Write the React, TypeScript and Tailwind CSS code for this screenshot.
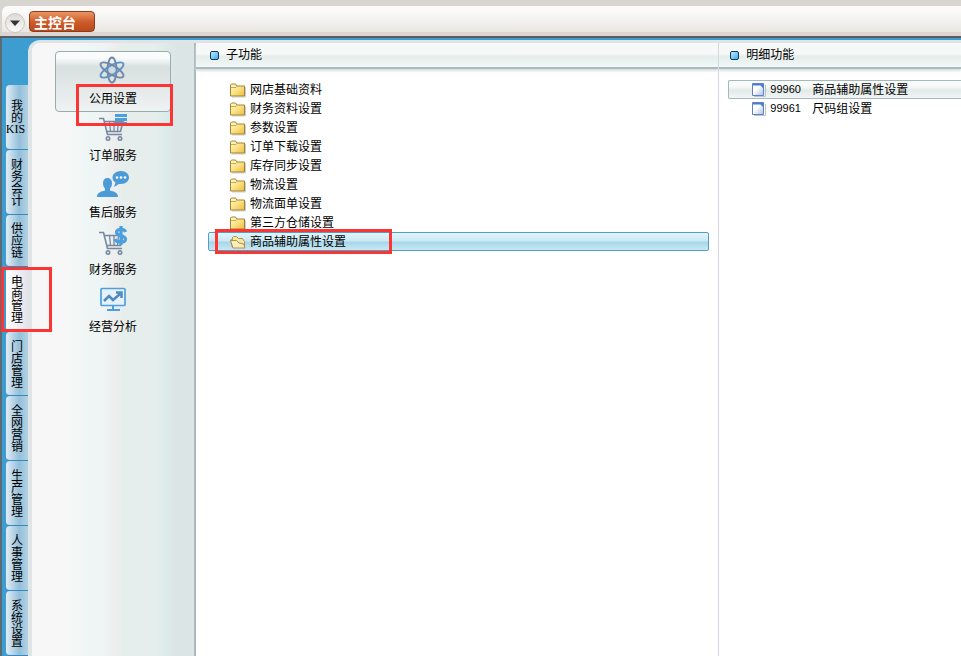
import { useState } from "react";
import type { ReactNode } from "react";

const modules = ["我的KIS", "财务会计", "供应链", "电商管理", "门店管理", "全网营销", "生产管理", "人事管理", "系统设置"];

const folders = [
  "网店基础资料",
  "财务资料设置",
  "参数设置",
  "订单下载设置",
  "库存同步设置",
  "物流设置",
  "物流面单设置",
  "第三方仓储设置",
  "商品辅助属性设置",
];

const details = [
  { code: "99960", name: "商品辅助属性设置" },
  { code: "99961", name: "尺码组设置" },
];

function AtomIcon() {
  return (
    <svg viewBox="0 0 32 32" className="h-8 w-8 shrink-0" fill="none" stroke="#6f89a6" strokeWidth="1.9">
      <ellipse cx="15" cy="16" rx="4.500" ry="12.500" />
      <ellipse cx="15" cy="16" rx="4.500" ry="13" stroke="#5b93c6" transform="rotate(60 15 16)" />
      <ellipse cx="15" cy="16" rx="4.500" ry="13" transform="rotate(120 15 16)" />
      <circle cx="15" cy="16" r="3" fill="#cfdce8" stroke="#c4d3e0" strokeWidth="1" />
    </svg>
  );
}

function Cart() {
  return (
    <g fill="none" stroke="#7688a0" strokeWidth="1.600">
      <path d="M2 7.500h4.500l4 16H25" />
      <path d="M7 10.500h19l-2.500 10H10" />
      <path d="M12.500 10.500l1 10M17 10.500v10M21.500 10.500l-1 10" strokeWidth="1.300" />
      <circle cx="11" cy="27.500" r="1.700" />
      <circle cx="23" cy="27.500" r="1.700" />
    </g>
  );
}

function OrderIcon() {
  return (
    <svg viewBox="0 0 32 32" className="h-8 w-8 shrink-0">
      <Cart />
      <path d="M18 3h12v3H18zM18 7h12v3H18zM18 11h12v2.500H18z" fill="#4c9fdf" />
    </svg>
  );
}

function SupportIcon() {
  return (
    <svg viewBox="0 0 32 32" className="h-8 w-8 shrink-0" fill="#4c9bd6">
      <path d="M10.500 10c3 0 4.500 2 4.500 5 0 3-1 4.500-2 5.500v2c4 1 8 2 8 6.500H0c0-4.500 4-5.500 8-6.500v-2c-1-1-2-2.500-2-5.500 0-3 1.500-5 4.500-5z" />
      <path d="M24 3c5 0 8 3 8 6.500s-3 6.500-8 6.500h-2l-5 3 1.500-4.500c-2-1-3-3-3-5C15.500 6 19 3 24 3z" />
      <g fill="#fff">
        <circle cx="20" cy="9.500" r="1.300" />
        <circle cx="24" cy="9.500" r="1.300" />
        <circle cx="28" cy="9.500" r="1.300" />
      </g>
    </svg>
  );
}

function FinanceIcon() {
  return (
    <svg viewBox="0 0 32 32" className="h-8 w-8 shrink-0">
      <Cart />
      <path d="M28.500 7c-1-4-9-3.500-9 .5 0 3.500 9 2.500 9 6.500s-9 4.500-10.500 0M24 1v19" fill="none" stroke="#4c9fdf" strokeWidth="3.200" />
    </svg>
  );
}

function ChartIcon() {
  return (
    <svg viewBox="0 0 32 32" className="h-8 w-8 shrink-0" fill="none" stroke="#4c9fdf" strokeWidth="1.700">
      <rect x="4" y="6.500" width="24" height="17" rx="1" fill="#e6f1fa" />
      <path d="M16 24v4M10 28h13" strokeWidth="2" />
      <path d="M7 19l5-5 4 4 7-6M19 10.500h5.500V16" stroke="#5089bd" strokeWidth="2.500" />
    </svg>
  );
}

function FolderIcon() {
  return (
    <svg viewBox="0 0 16 16" className="h-4 w-4 shrink-0">
      <defs>
        <linearGradient id="folder" x1="0" y1="0" x2="1" y2="1">
          <stop offset="0" stopColor="#fffbd0" />
          <stop offset="0.500" stopColor="#fbe184" />
          <stop offset="1" stopColor="#eebd3c" />
        </linearGradient>
      </defs>
      <path d="M2 15h13.500V5" fill="none" stroke="#c9cdd3" />
      <path d="M.5 14V3l1-1h4L7 4h7.500v10z" fill="url(#folder)" stroke="#a08538" />
      <path d="M1 5.500h5L7.500 4" fill="none" stroke="#c9ab50" />
    </svg>
  );
}

function OpenFolderIcon() {
  return (
    <svg viewBox="0 0 16 16" className="h-4 w-4 shrink-0">
      <path d="M2.500 13.500L.5 6l2-.5v-2l1-1h3l2 2h4l2 3v6z" fill="#f7e6a0" stroke="#a8925a" />
      <path d="M.5 6.500h6l2.500 2.500 4.500 1 1.500 4H3z" fill="#fbedb4" stroke="#a8925a" />
    </svg>
  );
}

function PageIcon() {
  return (
    <svg viewBox="0 0 14 14" className="h-3.5 w-3.5 shrink-0">
      <defs>
        <linearGradient id="page" x1="0" y1="0" x2="1" y2="1">
          <stop offset="0.400" stopColor="#fff" />
          <stop offset="1" stopColor="#a9c0ee" />
        </linearGradient>
      </defs>
      <path d="M2 13.500h11.500V2" fill="none" stroke="#b9c4d4" />
      <path d="M.5.5h11v12H.5z" fill="url(#page)" stroke="#6480be" />
      <path d="M1 1h10v1.500H1zM7 1h4.500v4.500z" fill="#4d7bd6" />
    </svg>
  );
}

function RedFrame({ className }: { className: string }) {
  return <span className={`pointer-events-none absolute z-10 border-3 border-[#fb3434] ${className}`} />;
}

function PanelTitle({ className, children }: { className: string; children: ReactNode }) {
  return (
    <h2
      className={`flex h-[26px] items-center gap-[7px] border-b-2 border-[#a9bbbb] bg-linear-to-b from-[#f7f9f9] from-45% via-[#e5edeb] via-55% to-[#f1f8f7] shadow-[0_2px_2px_#d9dfdf] ${className}`}
    >
      <span className="h-[9px] w-[9px] rounded-xs border border-[#123a5c] bg-linear-to-br from-[#b9ecff] to-[#3fa9ee]" />
      {children}
    </h2>
  );
}

const services = [
  { name: "公用设置", icon: <AtomIcon /> },
  { name: "订单服务", icon: <OrderIcon /> },
  { name: "售后服务", icon: <SupportIcon /> },
  { name: "财务服务", icon: <FinanceIcon /> },
  { name: "经营分析", icon: <ChartIcon /> },
];

function App() {
  const [activeModule, setActiveModule] = useState("电商管理");
  const [activeService, setActiveService] = useState("公用设置");
  const [activeFolder, setActiveFolder] = useState("商品辅助属性设置");
  const [activeCode, setActiveCode] = useState("99960");

  return (
    <div className="flex h-screen flex-col overflow-hidden bg-[#d8d4d0] font-['Liberation_Sans','Noto_Sans_CJK_SC',sans-serif] text-xs text-black">
      {/* Top bar */}
      <header className="border-b-2 border-[#5c5c60] pt-1.5 pl-0.5">
        <div className="flex h-[30px] items-start gap-1 rounded-tl-md border-b-4 border-[#dcd6d3] bg-linear-to-b from-[#fbfaf9] from-20% to-[#e9e6e2] pt-[5px] pl-[3px]">
          <button
            aria-label="菜单"
            className="mt-0.5 flex h-5 w-5 items-center justify-center rounded-full border border-[#c9c6c3] bg-linear-to-b from-[#dedbd8] to-[#fafafa]"
          >
            <svg viewBox="0 0 10 6" className="h-1.5 w-2.5">
              <path d="M0 .5h10L5 6z" fill="#333" />
            </svg>
          </button>
          <button className="h-[21px] w-[66px] rounded-sm border border-[#8d3c1c] bg-linear-to-b from-[#e99562] via-[#cf5d2c] via-50% to-[#b94a1c] pt-px pl-1 text-left text-sm leading-5 font-bold text-white">
            主控台
          </button>
        </div>
      </header>

      <div className="flex min-h-0 grow border-l-2 border-[#5c6a74] bg-[#3d9dd0]">
        {/* Module tabs */}
        <nav className="flex w-[26px] shrink-0 flex-col pt-[47px] pl-1">
          {modules.map((name) => (
            <button
              key={name}
              onClick={() => setActiveModule(name)}
              className={`relative flex flex-col items-center justify-center rounded-l-sm border-b border-[#2f8bc1] pr-[3px] ${
                name.length === 3 ? "h-[52px]" : "h-[65px]"
              } ${
                name === activeModule
                  ? "bg-linear-to-r from-white to-[#e4e2ea]"
                  : "bg-linear-to-r from-[#e2edf7] via-[#94bfd9] via-60% to-[#b3d2e2]"
              }`}
            >
              <span className="leading-4 [text-orientation:upright] [writing-mode:vertical-rl]">
                {name.replace("KIS", "")}
              </span>
              {name.endsWith("KIS") && <span className="font-['Liberation_Serif',serif] leading-3">KIS</span>}
              {name === "电商管理" && <RedFrame className="top-0 -bottom-px -left-[5px] w-[51px]" />}
            </button>
          ))}
        </nav>

        <div className="flex grow pt-0.5">
          <div className="flex grow rounded-tl-xl border-t-3 border-l-4 border-[#dfe5e6] bg-white">
            {/* Services */}
            <aside className="flex w-[164px] shrink-0 flex-col items-center rounded-tl-lg border-r-2 border-[#abb9bb] bg-[linear-gradient(to_right,#f7f7f7_22%,#eef6f5_36%,#eef5f4_44%,#eeeeee_50%,#e6eeec_56%,#e5eeec_76%,#dceceb_82%,#dce5e6_88%)] pt-2">
              {services.map(({ name, icon }) => (
                <button
                  key={name}
                  onClick={() => setActiveService(name)}
                  className={`relative -mb-1 flex h-[61px] w-[116px] flex-col items-center rounded-sm border pt-0.5 ${
                    name === activeService
                      ? "border-[#9aabac] bg-linear-to-b from-[#fafcfc] from-10% via-[#d9e0e0] via-25% to-[#eff2f2]"
                      : "border-transparent"
                  }`}
                >
                  {icon}
                  <span className="leading-[26px]">{name}</span>
                  {name === "公用设置" && <RedFrame className="top-8 -right-[3px] h-[42px] w-[97px]" />}
                </button>
              ))}
            </aside>

            {/* Sub functions */}
            <section className="flex-[523_1_0%] border-r border-[#d3d5e0]">
              <PanelTitle className="pl-3.5">子功能</PanelTitle>
              <ul className="py-[11px] pr-[9px] pl-3">
                {folders.map((name) => (
                  <li key={name} className="relative">
                    <button
                      onClick={() => setActiveFolder(name)}
                      className={`flex h-[19px] w-full items-center gap-1 rounded-xs border pl-[21px] ${
                        name === activeFolder
                          ? "border-[#4f9fc4] bg-[linear-gradient(#e3f4fa,#c9e8f3_48%,#a5d5e9_52%,#c9e8f3)]"
                          : "border-transparent"
                      }`}
                    >
                      {name === activeFolder ? <OpenFolderIcon /> : <FolderIcon />}
                      {name}
                    </button>
                    {name === "商品辅助属性设置" && <RedFrame className="-inset-y-[3px] left-[7px] w-[177px]" />}
                  </li>
                ))}
              </ul>
            </section>

            {/* Detail functions */}
            <section className="flex-[242_1_0%]">
              <PanelTitle className="pl-[11px]">明细功能</PanelTitle>
              <ul className="py-[11px] pl-[9px]">
                {details.map(({ code, name }) => (
                  <li key={code}>
                    <button
                      onClick={() => setActiveCode(code)}
                      className={`flex h-[19px] w-full items-center rounded-l-xs border border-r-0 pl-[23px] ${
                        code === activeCode
                          ? "border-[#a5b8bb] bg-linear-to-b from-[#f9fafa] from-30% via-[#e2eae8] via-55% to-[#f1f6f5]"
                          : "border-transparent"
                      }`}
                    >
                      <PageIcon />
                      <span className="ml-1 w-[42px] text-left text-[11px]">{code}</span>
                      {name}
                    </button>
                  </li>
                ))}
              </ul>
            </section>
          </div>
        </div>
      </div>
    </div>
  );
}

export default App;
